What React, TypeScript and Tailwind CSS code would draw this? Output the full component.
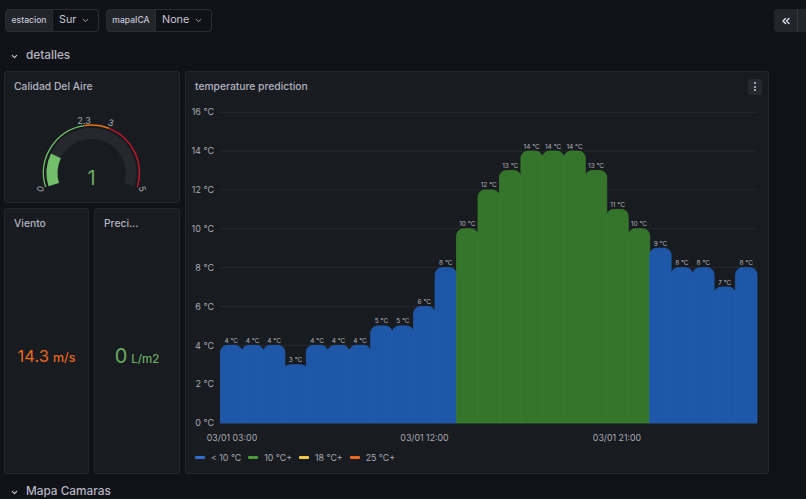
import { ChevronDown, ChevronsLeft } from "lucide-react";

const values = [4, 4, 4, 3, 4, 4, 4, 5, 5, 6, 8, 10, 12, 13, 14, 14, 14, 13, 11, 10, 9, 8, 8, 7, 8];
const x0 = 220.5;
const barW = 21.46;
const y0 = 423;
const unit = 19.42;

function barPath(i: number, v: number) {
  const l = x0 + i * barW;
  const r = l + barW;
  const t = y0 - v * unit;
  const rx = 7;
  const ry = v === 3 ? 3 : 7;
  return `M${l} ${y0}V${t + ry}A${rx} ${ry} 0 0 1 ${l + rx} ${t}H${r - rx}A${rx} ${ry} 0 0 1 ${r} ${t + ry}V${y0}Z`;
}

function polar(cx: number, cy: number, r: number, a: number) {
  const t = (a * Math.PI) / 180;
  return [cx + r * Math.cos(t), cy + r * Math.sin(t)];
}

function arc(r: number, from: number, to: number) {
  const cx = 91.5;
  const cy = 173;
  const start = 163 + (from / 5) * 214;
  const end = 163 + (to / 5) * 214;
  const [a, b] = polar(cx, cy, r, start);
  const [c, d] = polar(cx, cy, r, end);
  return `M${a} ${b}A${r} ${r} 0 ${end - start > 180 ? 1 : 0} 1 ${c} ${d}`;
}

function Variable({ label, value, labelW, w }: { label: string; value: string; labelW: string; w: string }) {
  return (
    <div className="flex h-[23px] items-stretch">
      <div className={`flex items-center justify-center rounded-l-[4px] border border-[#2a2d33] bg-[#22252b] text-[8.6px] font-medium text-[#c4c4d2] ${labelW}`}>
        {label}
      </div>
      <div className={`flex items-center justify-between rounded-r-[4px] border border-l-0 border-[#2a2d33] pl-[6px] pr-[8px] text-[10.8px] text-[#c4c4d2] ${w}`}>
        <span>{value}</span>
        <ChevronDown size={9} strokeWidth={2.5} className="text-[#a5a6b0]" />
      </div>
    </div>
  );
}

function Row({ title }: { title: string }) {
  return (
    <div className="flex h-[20px] items-center pl-[10px] text-[11.8px] font-medium text-[#b4b4c2]">
      <ChevronDown size={9} strokeWidth={3} className="mr-[7px] text-[#ccccdc]" />
      <span>{title}</span>
    </div>
  );
}

function Stat({ title, value, unitText, color, size, unitSize, w }: { title: string; value: string; unitText: string; color: string; size: string; unitSize: string; w: string }) {
  return (
    <div className={`flex flex-col rounded-[3px] border border-[#24272d] bg-[#181b1f] ${w}`}>
      <div className="flex h-[29px] items-center px-[9px] text-[10.3px] font-medium text-[#b4b4c2]">{title}</div>
      <div className={`flex flex-1 items-center justify-center pt-[1px] ${color}`}>
        <div className="flex items-baseline">
          <span className={`font-normal ${size}`}>{value}</span>
          <span className={`ml-[4px] font-medium ${unitSize}`}>{unitText}</span>
        </div>
      </div>
    </div>
  );
}

function Gauge() {
  return (
    <svg width="174" height="101" viewBox="5 101 174 101" className="block">
      <path d={arc(39.5, 0, 5)} fill="none" stroke="#26282e" strokeWidth="11" />
      <path d={arc(39.5, 0, 1)} fill="none" stroke="#73bf69" strokeWidth="11" />
      <path d={arc(48, 0, 2.3)} fill="none" stroke="#73bf69" strokeWidth="1.3" />
      <path d={arc(48, 2.3, 3)} fill="none" stroke="#e8730f" strokeWidth="1.6" />
      <path d={arc(48, 3, 5)} fill="none" stroke="#c4162a" strokeWidth="1.4" />
      <g fontFamily="Inter, sans-serif" fontSize="9" fill="#a9aab5" textAnchor="middle">
        <text x="84" y="123.5">2.3</text>
        <text x="111" y="126" transform="rotate(18 111 122.5)">3</text>
        <text x="40.5" y="192" transform="rotate(-75 40.5 189)">0</text>
        <text x="142" y="192" transform="rotate(75 142 189)">5</text>
      </g>
      <text x="91.5" y="185" fontFamily="Inter, sans-serif" fontSize="20" fill="#6aad5f" textAnchor="middle">1</text>
    </svg>
  );
}

function Chart() {
  const ticks = [0, 2, 4, 6, 8, 10, 12, 14, 16];
  return (
    <svg width="582" height="348" viewBox="186 101 582 348" className="block" fontFamily="Inter, sans-serif">
      {ticks.map((t) => {
        const y = y0 - t * unit;
        return (
          <g key={t}>
            <line x1="219" x2="757" y1={y} y2={y} stroke="#26292f" strokeWidth="1" />
            <text x="214" y={y + 3.2} fontSize="9" fill="#a9aab5" textAnchor="end">{`${t} °C`}</text>
          </g>
        );
      })}
      {values.map((v, i) => (
        <path
          key={i}
          d={barPath(i, v)}
          fill={v >= 10 ? "#35752b" : "#1f57a8"}
          stroke={v >= 10 ? "#3a7d30" : "#225db0"}
          strokeWidth="0.8"
        />
      ))}
      {values.map((v, i) => (
        <text
          key={i}
          x={x0 + i * barW + barW / 2}
          y={y0 - v * unit - 2.5}
          fontSize="6.5"
          fill="#b0b1bb"
          textAnchor="middle"
        >{`${v} °C`}</text>
      ))}
      <g fontSize="8.8" fill="#a9aab5" textAnchor="middle">
        <text x="232" y="441">03/01 03:00</text>
        <text x="424.5" y="441">03/01 12:00</text>
        <text x="617" y="441">03/01 21:00</text>
      </g>
    </svg>
  );
}

const legend = [
  { label: "< 10 °C", color: "bg-[#2f6fc9]" },
  { label: "10 °C+", color: "bg-[#4a9a3c]" },
  { label: "18 °C+", color: "bg-[#eec544]" },
  { label: "25 °C+", color: "bg-[#e8691c]" },
];

export default function App() {
  return (
    <div
      className="h-[499px] w-[806px] overflow-hidden bg-[#111217] text-[#ccccdc]"
      style={{ fontFamily: "Inter, sans-serif" }}
    >
      <div className="flex items-center pl-[5px] pt-[9px]">
        <div className="flex gap-[7px]">
          <Variable label="estacion" value="Sur" labelW="w-[48px]" w="w-[46px]" />
          <Variable label="mapaICA" value="None" labelW="w-[50px]" w="w-[56px]" />
        </div>
        <div className="ml-auto mr-[-12px] flex h-[23px] w-[44px] shrink-0 items-center rounded-[4px] bg-[#22252b]">
          <div className="flex h-full w-[24px] items-center justify-center border-r border-[#34373d]">
            <ChevronsLeft size={12} strokeWidth={3} className="text-[#d8d9e2]" />
          </div>
        </div>
      </div>

      <div className="mt-[14px]">
        <Row title="detalles" />
      </div>

      <div className="mt-[5px] flex gap-[5px] pl-[4px]">
        <div className="flex w-[176px] flex-col gap-[5px]">
          <div className="h-[132px] rounded-[3px] border border-[#24272d] bg-[#181b1f]">
            <div className="flex h-[29px] items-center px-[9px] text-[10.3px] font-medium text-[#b4b4c2]">Calidad Del Aire</div>
            <Gauge />
          </div>
          <div className="flex h-[266px] gap-[5px]">
            <Stat title="Viento" value="14.3" unitText="m/s" color="text-[#e8691c]" size="text-[16.5px]" unitSize="text-[12.5px]" w="w-[85px]" />
            <Stat title="Preci..." value="0" unitText="L/m2" color="text-[#6aad5f]" size="text-[20px]" unitSize="text-[11.5px]" w="w-[86px]" />
          </div>
        </div>

        <div className="flex h-[403px] w-[584px] flex-col rounded-[3px] border border-[#24272d] bg-[#181b1f]">
          <div className="flex h-[29px] shrink-0 items-center justify-between pl-[9px] pr-[6px]">
            <span className="text-[10.3px] font-medium text-[#b4b4c2]">temperature prediction</span>
            <div className="flex h-[16px] w-[14px] flex-col items-center justify-center gap-[1.5px] rounded-[3px] bg-[#26292f]">
              <span className="h-[2px] w-[2px] rounded-full bg-[#ccccdc]" />
              <span className="h-[2px] w-[2px] rounded-full bg-[#ccccdc]" />
              <span className="h-[2px] w-[2px] rounded-full bg-[#ccccdc]" />
            </div>
          </div>
          <Chart />
          <div className="flex items-center pl-[9px] pt-[2px] text-[8.8px] text-[#a9aab5]">
            {legend.map((l) => (
              <div key={l.label} className="mr-[7px] flex items-center">
                <span className={`mr-[6px] h-[3px] w-[10px] rounded-[1px] ${l.color}`} />
                <span>{l.label}</span>
              </div>
            ))}
          </div>
        </div>
      </div>

      <div className="mt-[8px]">
        <Row title="Mapa Camaras" />
      </div>
    </div>
  );
}
